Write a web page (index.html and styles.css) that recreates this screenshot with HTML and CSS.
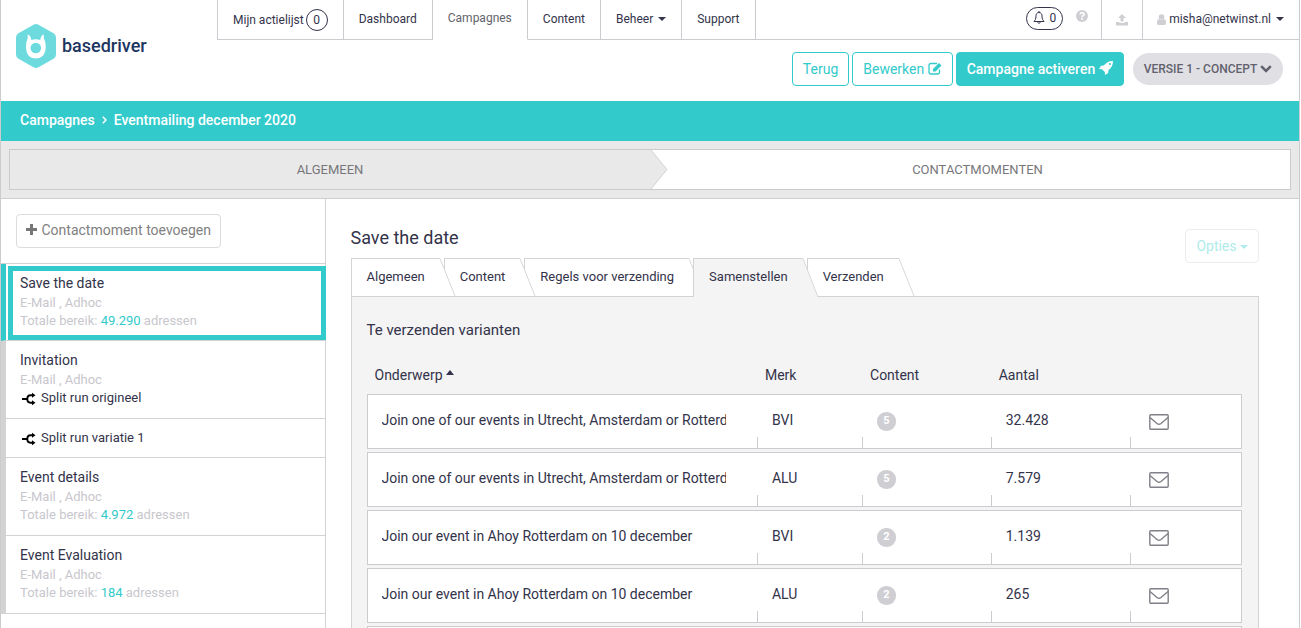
FILE: index.html
```html
<!DOCTYPE html>
<html lang="nl">
<head>
<meta charset="utf-8">
<title>Basedriver - Eventmailing december 2020</title>
<link rel="stylesheet" href="styles.css">
</head>
<body>
<svg class="sprite" aria-hidden="true">
  <symbol id="split" viewBox="0 0 16 14"><path d="M2 7h5.500M13 3.300h-2.500C8.500 3.300 7.300 4.800 7.300 7s1.200 3.700 3.200 3.700H13" fill="none" stroke="#000" stroke-width="1.900"/><path d="M12 .8l3.500 2.500L12 5.800zM12 8.200l3.500 2.500-3.500 2.500z"/></symbol>
  <symbol id="mail" viewBox="0 0 20 16"><rect x="0.800" y="0.800" width="18.400" height="14.400" rx="1" fill="none" stroke="#808088" stroke-width="1.400"/><path d="M1 3.500c2.500 2.300 5 4.200 7 6 1.400 1.100 2.600 1.100 4 0 2-1.800 4.500-3.700 7-6" fill="none" stroke="#808088" stroke-width="1.400"/></symbol>
</svg>
<div class="frame">
  <header class="header">
    <a class="logo" href="#">
      <svg class="logo-mark" viewBox="0 0 40 44" aria-hidden="true"><path d="M17.500 0.700q2.500-1.400 5 0l15 8.500q2.500 1.500 2.500 4.300v17q0 2.800-2.500 4.300l-15 8.500q-2.500 1.400-5 0l-15-8.500Q0 33.300 0 30.500v-17q0-2.800 2.500-4.300z" fill="#6ddade"/><path d="M11.500 10.500c2 .5 3.500 2 3.800 5.500 3-1 6-1 9 0 .3-3.500 1.700-5 3.700-5.500-.5 2-.3 4 .7 6 .8 1.500 1 4 1 6.500 0 7-3.700 11.500-9.900 11.500S10 30 10 23c0-2.500.2-5 1-6.500.8-2 1-4 .5-6z" fill="#fff"/><circle cx="19.800" cy="24" r="5.300" fill="#6ddade"/></svg>
      <span>basedriver</span>
    </a>
    <div class="header-main">
      <nav class="topnav">
        <a href="#">Mijn actielijst <span class="count">0</span></a>
        <a href="#">Dashboard</a>
        <a class="current" href="#">Campagnes</a>
        <a href="#">Content</a>
        <a href="#">Beheer <i class="caret"></i></a>
        <a href="#">Support</a>
        <div class="alerts">
          <button class="bell" type="button"><svg width="12" height="14" viewBox="0 0 12 14" aria-hidden="true"><path d="M6 1.500C3.800 1.500 3 3.200 3 5c0 3-.8 4.500-2.200 5.500h10.400C9.800 9.500 9 8 9 5c0-1.800-.8-3.500-3-3.500zM6 0v1.500M4.800 10.800c0 2 2.400 2 2.400 0" fill="none" stroke="#33334a"/></svg>0</button>
          <button class="help" type="button" aria-label="Help"><svg width="12" height="12" viewBox="0 0 12 12" aria-hidden="true"><circle cx="6" cy="6" r="6" fill="#cfced3"/><path d="M4 4.300C4.300 2.300 8 2.300 8 4.400 8 5.600 6.100 5.600 6.100 7.200M6.100 8v1.700" fill="none" stroke="#fff" stroke-width="1.600"/></svg></button>
        </div>
        <a class="upload" href="#" aria-label="Upload"><svg width="12" height="12" viewBox="0 0 12 12" aria-hidden="true"><path d="M6 0l4 4H7.500v3.500h-3V4H2zM0 8h3.500v1h5V8H12v3.500H0z" fill="#cfced3"/></svg></a>
        <a class="user" href="#"><svg width="9" height="11" viewBox="0 0 9 11" aria-hidden="true"><circle cx="4.500" cy="3" r="2.800" fill="#cfced3"/><path d="M0 9C0 6.500.8 5 2 5c1.500 1.200 3.500 1.200 5 0 1.200 0 2 1.500 2 4 0 1-.5 2-1.500 2h-6C.5 11 0 10 0 9z" fill="#cfced3"/></svg> misha@netwinst.nl <i class="caret"></i></a>
      </nav>
      <div class="actions">
        <button class="btn" type="button">Terug</button>
        <button class="btn" type="button">Bewerken <svg width="14" height="13" viewBox="0 0 14 13" aria-hidden="true"><path d="M9 1.500H3Q1 1.500 1 3.500v6.500Q1 12 3 12h6.500q2 0 2-2V7.500" fill="none" stroke="#32cacb" stroke-width="1.300"/><path d="M5 7l6-6 2.500 2.500-6 6H5z" fill="#32cacb"/></svg></button>
        <button class="btn solid" type="button">Campagne activeren <svg width="14" height="14" viewBox="0 0 14 14" aria-hidden="true"><path d="M14 0C9.500 0 7 1.800 4.800 4.600L2 4.800 0 8l3 .2L5.800 11 6 14l3.200-2 .2-2.800C12.200 7 14 4.500 14 0zM11 2a1 1 0 1 1 0 2 1 1 0 0 1 0-2z" fill="#fff" fill-rule="evenodd"/></svg></button>
        <button class="version" type="button">VERSIE 1 - CONCEPT <svg width="12" height="8" viewBox="0 0 12 8" aria-hidden="true"><path d="M1.200 1.200L6 6l4.800-4.800" fill="none" stroke="#62626e" stroke-width="2.500"/></svg></button>
      </div>
    </div>
  </header>

  <nav class="breadcrumb"><a href="#">Campagnes</a><svg width="5" height="8" viewBox="0 0 5 8" aria-hidden="true"><path d="M.8.8L4 4 .8 7.200" fill="none" stroke="#fff" stroke-width="1.500"/></svg><span>Eventmailing december 2020</span></nav>

  <div class="steps">
    <a class="step done" href="#">ALGEMEEN<svg class="arrow" viewBox="0 0 18 39" aria-hidden="true"><path d="M0 0h1l16 19.500L1 39H0z" fill="#e9e9e9"/><path d="M1 0l16 19.500L1 39" fill="none" stroke="#d3d3d3"/></svg></a>
    <a class="step next" href="#">CONTACTMOMENTEN</a>
  </div>

  <div class="body">
    <aside class="sidebar">
      <div class="add-row">
        <button class="add" type="button"><svg width="11" height="11" viewBox="0 0 11 11" aria-hidden="true"><path d="M5.500 0v11M0 5.500h11" stroke="#777" stroke-width="3"/></svg> Contactmoment toevoegen</button>
      </div>
      <ul class="moments">
        <li class="active"><div class="card"><h3>Save the date</h3><p>E-Mail , Adhoc</p><p>Totale bereik: <b>49.290</b> adressen</p></div></li>
        <li><div class="card"><h3>Invitation</h3><p>E-Mail , Adhoc</p><p class="split"><svg width="16" height="14" aria-hidden="true"><use href="#split"/></svg>Split run origineel</p></div></li>
        <li><div class="card variant"><p class="split"><svg width="16" height="14" aria-hidden="true"><use href="#split"/></svg>Split run variatie 1</p></div></li>
        <li><div class="card"><h3>Event details</h3><p>E-Mail , Adhoc</p><p>Totale bereik: <b>4.972</b> adressen</p></div></li>
        <li><div class="card"><h3>Event Evaluation</h3><p>E-Mail , Adhoc</p><p>Totale bereik: <b>184</b> adressen</p></div></li>
      </ul>
    </aside>

    <main class="content">
      <div class="title-row">
        <h1>Save the date</h1>
        <button class="options" type="button" disabled>Opties <i class="caret"></i></button>
      </div>
      <nav class="tabs">
        <a class="tab" href="#"><span>Algemeen</span><svg viewBox="0 0 16 39" aria-hidden="true"><path d="M0 .5L15 38H0z"/><path class="edge" d="M0 .5L15 38"/></svg></a>
        <a class="tab" href="#"><span>Content</span><svg viewBox="0 0 16 39" aria-hidden="true"><path d="M0 .5L15 38H0z"/><path class="edge" d="M0 .5L15 38"/></svg></a>
        <a class="tab" href="#"><span>Regels voor verzending</span><svg viewBox="0 0 16 39" aria-hidden="true"><path d="M0 .5L15 38H0z"/><path class="edge" d="M0 .5L15 38"/></svg></a>
        <a class="tab selected" href="#"><span>Samenstellen</span><svg viewBox="0 0 16 39" aria-hidden="true"><path d="M0 .5L15 39H0z"/><path class="edge" d="M0 .5L15 39"/></svg></a>
        <a class="tab" href="#"><span>Verzenden</span><svg viewBox="0 0 16 39" aria-hidden="true"><path d="M0 .5L15 38H0z"/><path class="edge" d="M0 .5L15 38"/></svg></a>
      </nav>
      <section class="panel">
        <h2>Te verzenden varianten</h2>
        <table class="variants">
          <thead>
            <tr><th class="subject">Onderwerp <i class="caret up"></i></th><th class="brand">Merk</th><th class="parts">Content</th><th class="amount">Aantal</th><th class="send" aria-label="E-mail"></th></tr>
          </thead>
          <tbody>
            <tr><td><div class="clip">Join one of our events in Utrecht, Amsterdam or Rotterdam</div></td><td>BVI</td><td><span class="badge">5</span></td><td>32.428</td><td><svg class="mail" width="20" height="16" role="img" aria-label="E-mail"><use href="#mail"/></svg></td></tr>
            <tr><td><div class="clip">Join one of our events in Utrecht, Amsterdam or Rotterdam</div></td><td>ALU</td><td><span class="badge">5</span></td><td>7.579</td><td><svg class="mail" width="20" height="16" role="img" aria-label="E-mail"><use href="#mail"/></svg></td></tr>
            <tr><td><div class="clip">Join our event in Ahoy Rotterdam on 10 december</div></td><td>BVI</td><td><span class="badge">2</span></td><td>1.139</td><td><svg class="mail" width="20" height="16" role="img" aria-label="E-mail"><use href="#mail"/></svg></td></tr>
            <tr><td><div class="clip">Join our event in Ahoy Rotterdam on 10 december</div></td><td>ALU</td><td><span class="badge">2</span></td><td>265</td><td><svg class="mail" width="20" height="16" role="img" aria-label="E-mail"><use href="#mail"/></svg></td></tr>
            <tr><td></td><td></td><td></td><td></td><td></td></tr>
          </tbody>
        </table>
      </section>
    </main>
  </div>
</div>
</body>
</html>
```
FILE: styles.css
```css
* { box-sizing: border-box; }
html, body { height: 100%; }
body {
  margin: 0;
  overflow: hidden;
  background: #fff;
  color: #33334a;
  font: 14px/18px Roboto, "Liberation Sans", sans-serif;
}
a { color: inherit; text-decoration: none; }
button { font: inherit; color: inherit; background: none; border: 0; padding: 0; margin: 0; }
h1, h2, h3, p, ul { margin: 0; padding: 0; font-weight: 400; }
ul { list-style: none; }
.sprite { position: absolute; width: 0; height: 0; }

.frame {
  display: flex;
  flex-direction: column;
  min-height: 100%;
  margin-right: 1px;
  border: 1px solid #cbcbd0;
  border-width: 0 1px;
}

.caret {
  display: inline-block;
  margin-left: 2px;
  border: 4px solid transparent;
  border-top-color: currentColor;
  border-bottom: 0;
  vertical-align: 2px;
}
.caret.up {
  margin-left: 0;
  border: 4px solid transparent;
  border-bottom: 5px solid currentColor;
  border-top: 0;
  vertical-align: 5px;
}

/* Header */
.header { display: flex; height: 101px; }
.logo {
  display: flex;
  align-items: center;
  gap: 6px;
  width: 216px;
  height: 92px;
  padding-left: 15px;
  color: #1d3561;
  font-size: 18px;
  font-weight: 500;
}
.logo-mark { width: 40px; height: 44px; }
.header-main { flex: 1; display: flex; flex-direction: column; }
.topnav { display: flex; height: 40px; font-size: 12px; border-left: 1px solid #cbcbd0; }
.topnav > * {
  display: flex;
  align-items: center;
  gap: 3px;
  padding: 0 15px 1px;
  border-right: 1px solid #cbcbd0;
  border-bottom: 1px solid #cbcbd0;
}
.topnav > :first-child { gap: 2px; padding-bottom: 0; }
.topnav > .current { align-items: flex-start; padding-top: 9px; border-bottom-color: transparent; color: #63636b; }
.count { border: 1px solid #33334a; border-radius: 11px; width: 22px; height: 22px; line-height: 20px; text-align: center; }
.topnav > .alerts { flex: 1; justify-content: flex-end; gap: 13px; padding: 0 13px 3px 0; }
.bell { display: flex; align-items: center; gap: 4px; height: 23px; padding: 0 6px; border: 1px solid #33334a; border-radius: 12px; }
.help { display: flex; padding-bottom: 4px; }
.topnav > .upload { padding: 0 14px; }
.topnav > .user { border-right: 0; padding-left: 14px; }
.actions { display: flex; justify-content: flex-end; align-items: center; gap: 3px; padding: 12px 16px 0 0; }
.btn {
  height: 34px;
  padding: 0 10px;
  border: 1px solid #32cacb;
  border-radius: 4px;
  color: #32cacb;
}
.btn svg { vertical-align: -1px; }
.solid { background: #32cacb; color: #fff; font-weight: 500; }
.version {
  height: 32px;
  margin-left: 6px;
  padding: 0 11px;
  border-radius: 16px;
  background: #e0dfe4;
  color: #62626e;
  font-size: 12px;
  font-weight: 500;
}

/* Breadcrumb and steps */
.breadcrumb {
  display: flex;
  align-items: center;
  gap: 7px;
  height: 40px;
  padding: 0 19px 2px;
  background: #32cacb;
  color: #fff;
  font-weight: 500;
}
.steps { display: flex; padding: 8px; background: #e9e9e9; border-bottom: 1px solid #cfcfcf; }
.step {
  position: relative;
  flex: 1 1 50%;
  height: 41px;
  border: 1px solid #cbcbcb;
  border-left: 0;
  background: #fff;
  color: #77777b;
  font-size: 13px;
  line-height: 39px;
  text-align: center;
}
.step.done { z-index: 1; border-left: 1px solid #cbcbcb; border-right: 0; background: #e9e9e9; }
.step.next { padding-left: 15px; }
.arrow { position: absolute; left: 100%; top: 0; width: 18px; height: 39px; }

/* Sidebar */
.body { flex: 1; display: flex; }
.sidebar { flex: 0 0 25%; border-right: 1px solid #d3d3d3; }
.add-row { height: 65px; padding: 15px; border-bottom: 1px solid #d3d3d3; }
.add { height: 34px; padding: 0 9px 2px; border: 1px solid #dcdcdc; border-radius: 4px; color: #808080; }
.add svg { vertical-align: 0; margin-right: 1px; }
.moments li { border-left: 5px solid #d3d3d3; }
.card { padding: 9px 14px 11px; border-bottom: 1px solid #d3d3d3; }
.card.variant { padding-top: 10px; padding-bottom: 10px; }
.card h3 { font-size: 14px; line-height: 21px; }
.card p { color: #c8c7cd; font-size: 13px; line-height: 18px; }
.card b { color: #32cacb; font-weight: 400; }
.card .split { display: flex; align-items: center; gap: 5px; color: #33334a; }
.card .split svg { margin-top: 2px; }
.moments .active { border-left-color: #32cacb; border-bottom: 1px solid #d3d3d3; padding: 2px 0 0 2px; }
.active .card { margin-right: -1px; padding: 2px 7px 5px; border: 5px solid #32cacb; }

/* Content */
.content { flex: 1; padding: 30px 40px 0 25px; }
.title-row { display: flex; align-items: flex-start; justify-content: space-between; height: 29px; }
h1 { font-size: 18px; line-height: 18px; }
.options { height: 34px; padding: 0 10px; border: 1px solid #ededed; border-radius: 4px; background: #fff; color: #afebeb; }
.options .caret { margin-left: 0; }
.tabs { display: flex; height: 38px; font-size: 13px; }
.tab { position: relative; padding-right: 4px; }
.tab span { display: block; height: 38px; padding: 0 15px; border: 1px solid #d3d3d3; border-width: 1px 0 0 1px; background: #fff; line-height: 36px; }
.tab svg { position: absolute; right: -12px; top: 0; width: 16px; height: 39px; z-index: 1; fill: #fff; }
.tab .edge { fill: none; stroke: #d8d8d8; }
.selected { z-index: 2; }
.selected span { height: 39px; background: #f4f4f4; }
.selected svg { fill: #f4f4f4; }
.panel { padding: 24px 16px 0 15px; border: 1px solid #d3d3d3; border-bottom: 0; background: #f4f4f4; }
h2 { font-size: 15px; line-height: 18px; }
.variants { width: 100%; margin-top: 12px; table-layout: fixed; border-collapse: separate; border-spacing: 0 3px; }
.variants th { height: 37px; padding: 4px 8px 0; text-align: left; font-weight: 400; }
.subject { width: 44.600%; }
.brand { width: 12%; }
.parts { width: 14.700%; }
.amount { width: 15.900%; }
.variants td {
  height: 55px;
  padding: 0 15px 4px;
  border: 1px solid #cbcbd0;
  border-width: 1px 0;
  background: #fff linear-gradient(#cbcbd0, #cbcbd0) no-repeat left bottom / 1px 11px;
}
.variants td:first-child { padding-left: 14px; padding-right: 31px; border-left-width: 1px; background-image: none; }
.variants td:last-child { border-right-width: 1px; }
.clip { overflow: hidden; white-space: nowrap; }
.badge {
  display: block;
  width: 19px;
  height: 19px;
  margin-top: 4px;
  border-radius: 9px;
  background: #cfced3;
  color: #fff;
  font-size: 11px;
  font-weight: 700;
  line-height: 18px;
  text-align: center;
}
.mail { display: block; margin: 5px 0 0 4px; }
```
